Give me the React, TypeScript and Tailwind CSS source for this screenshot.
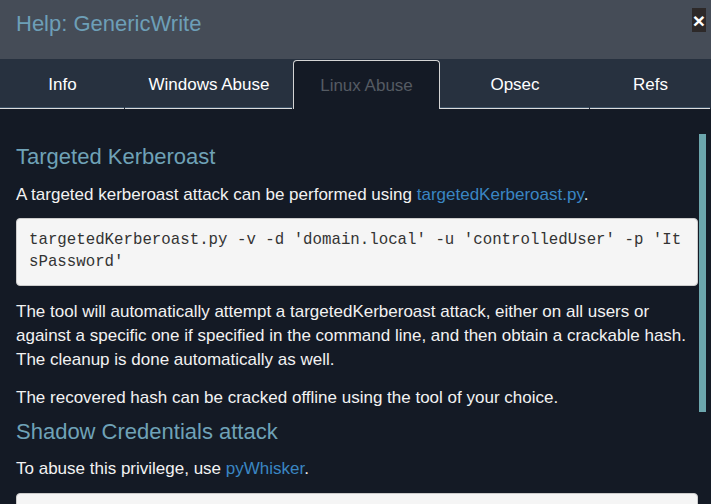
const tabs = [
  { label: "Info", w: "w-[125px]" },
  { label: "Windows Abuse", w: "w-[168px]" },
  { label: "Linux Abuse", w: "w-[147px]", active: true },
  { label: "Opsec", w: "w-[150px]" },
  { label: "Refs", w: "w-[121px]" },
];

export default function App() {
  return (
    <div className="flex h-[504px] w-[711px] flex-col overflow-hidden bg-[#141a25] font-['Liberation_Sans',Arial,sans-serif] text-[17px] text-[#f2f2f2]">
      <header className="flex h-[59px] shrink-0 items-start justify-between bg-[#454c57] pl-4 pr-[5px]">
        <h1 className="mt-[11px] text-[22px] leading-[26px] text-[#6d9fb7]">Help: GenericWrite</h1>
        <button className="mt-[8px] flex h-[24px] w-[14px] items-center justify-center bg-[#2d2929] text-[21px] font-bold leading-none text-white">
          ×
        </button>
      </header>

      <nav className="flex h-[50px] shrink-0 bg-[#27313f]">
        {tabs.map((t) =>
          t.active ? (
            <div
              key={t.label}
              className={`${t.w} mt-[1px] flex items-center justify-center rounded-t-[4px] border border-b-0 border-[#d4d4d4] bg-[#141a25] pt-[1px] text-[#555b63]`}
            >
              {t.label}
            </div>
          ) : (
            <div key={t.label} className={`${t.w} flex flex-col`}>
              <div className="flex flex-1 items-center justify-center pt-[3px] text-white">{t.label}</div>
              <div className="mr-[1px] h-[2px] border-t border-[#3c5166] bg-[#dcdcdc]" />
            </div>
          )
        )}
      </nav>

      <div className="relative flex-1 overflow-hidden">
        <div className="pl-4 pr-[13px] pt-[36px]">
          <h2 className="mb-[14px] text-[22px] leading-[24px] text-[#6fa2b7]">Targeted Kerberoast</h2>
          <p className="mb-[11px] leading-[24px]">
            A targeted kerberoast attack can be performed using{" "}
            <a className="text-[#3a86c3]">targetedKerberoast.py</a>.
          </p>
          <pre className="mb-[14px] whitespace-pre-wrap break-all rounded-[4px] border border-[#cccccc] bg-[#f5f5f5] px-[12px] pb-[12px] pt-[10px] font-['Liberation_Mono',monospace] text-[15.75px] leading-[22px] text-[#333333]">
            targetedKerberoast.py -v -d 'domain.local' -u 'controlledUser' -p 'ItsPassword'
          </pre>
          <p className="mb-[14px] leading-[24px]">
            The tool will automatically attempt a targetedKerberoast attack, either on all users or against a specific
            one if specified in the command line, and then obtain a crackable hash. The cleanup is done automatically
            as well.
          </p>
          <p className="mb-[10px] leading-[24px]">The recovered hash can be cracked offline using the tool of your choice.</p>
          <h2 className="mb-[13px] text-[22px] leading-[24px] text-[#6fa2b7]">Shadow Credentials attack</h2>
          <p className="mb-[12px] leading-[24px]">
            To abuse this privilege, use <a className="text-[#3a86c3]">pyWhisker</a>.
          </p>
          <pre className="h-[60px] rounded-[4px] border border-[#cccccc] bg-[#f5f5f5]" />
        </div>
        <div className="absolute right-[5px] top-[25px] h-[278px] w-[7px] bg-[#6ca6ad]" />
      </div>
    </div>
  );
}
